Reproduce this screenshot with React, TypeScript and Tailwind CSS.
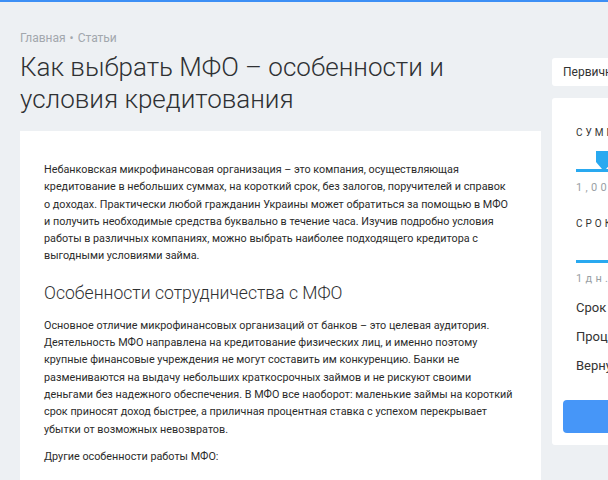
import React from "react";

const font = { fontFamily: "Roboto, 'Noto Sans', sans-serif" };

function Slider({ label, value, thumb }: { label: string; value: string; thumb: boolean }) {
  return (
    <div>
      <div className="text-[10px] tracking-[0.3em] text-[#333] leading-[10px]">{label}</div>
      <div className="relative mt-[31px] h-[3px] bg-[#29a9f0]">
        {thumb && (
          <svg
            className="absolute left-[20px] top-[-18px]"
            width="16"
            height="19"
            viewBox="0 0 16 19"
          >
            <path d="M0 0 H16 V11 L10 18 H6 L0 11 Z" fill="#29a9f0" />
          </svg>
        )}
      </div>
      <div className="mt-[10px] text-[11px] tracking-[0.3em] text-[#9a9fa5] leading-[11px]">{value}</div>
    </div>
  );
}

export default function App() {
  return (
    <div
      className="w-[608px] h-[480px] overflow-hidden bg-[#edf0f3] border-t-2 border-[#3d8ff5]"
      style={font}
    >
      <div className="flex gap-[11px] pl-5">
        <main className="w-[521px] shrink-0">
          <nav className="mt-[28px] text-[12px] leading-4 text-[#a2a7ad]">
            Главная <span className="mx-[1px]">•</span> Статьи
          </nav>
          <h1 className="mt-[5px] text-[26px] leading-[32px] font-light text-[#2f3133]">
            Как выбрать МФО – особенности и условия кредитования
          </h1>
          <article className="mt-[16px] bg-white px-6 pt-[30px] pb-6 text-[10.8px] leading-[17.3px] text-[#2b2b2b]">
            <p>
              Небанковская микрофинансовая организация – это компания, осуществляющая
              <br />
              кредитование в небольших суммах, на короткий срок, без залогов, поручителей и справок
              <br />
              о доходах. Практически любой гражданин Украины может обратиться за помощью в МФО
              <br />
              и получить необходимые средства буквально в течение часа. Изучив подробно условия
              <br />
              работы в различных компаниях, можно выбрать наиболее подходящего кредитора с
              <br />
              выгодными условиями займа.
            </p>
            <h2 className="mt-[16px] text-[17.6px] leading-6 font-light text-[#2f3133]">
              Особенности сотрудничества с МФО
            </h2>
            <p className="mt-[12px]">
              Основное отличие микрофинансовых организаций от банков – это целевая аудитория.
              <br />
              Деятельность МФО направлена на кредитование физических лиц, и именно поэтому
              <br />
              крупные финансовые учреждения не могут составить им конкуренцию. Банки не
              <br />
              размениваются на выдачу небольших краткосрочных займов и не рискуют своими
              <br />
              деньгами без надежного обеспечения. В МФО все наоборот: маленькие займы на короткий
              <br />
              срок приносят доход быстрее, а приличная процентная ставка с успехом перекрывает
              <br />
              убытки от возможных невозвратов.
            </p>
            <p className="mt-[10px]">Другие особенности работы МФО:</p>
          </article>
        </main>
        <aside className="w-[240px] shrink-0 pt-[56px]">
          <div className="h-[28px] rounded-[3px] bg-white pl-[11px] text-[12px] leading-[28px] text-[#333]">
            Первичный заем
          </div>
          <div className="mt-[12px] rounded-[3px] bg-white px-[11px] pt-[30px] pb-[12px]">
            <div className="pl-[13px]">
              <Slider label="СУММА" value="1,000 грн" thumb />
              <div className="mt-[26px]">
                <Slider label="СРОК" value="1дн." thumb={false} />
              </div>
              <div className="mt-[15px] flex flex-col gap-[11px] text-[13px] leading-[18px] text-[#333]">
                <div>Срок</div>
                <div>Процент</div>
                <div>Вернуть</div>
              </div>
            </div>
            <button className="mt-[25px] block h-[33px] w-full rounded-[4px] bg-[#4696f8]" />
          </div>
        </aside>
      </div>
    </div>
  );
}
